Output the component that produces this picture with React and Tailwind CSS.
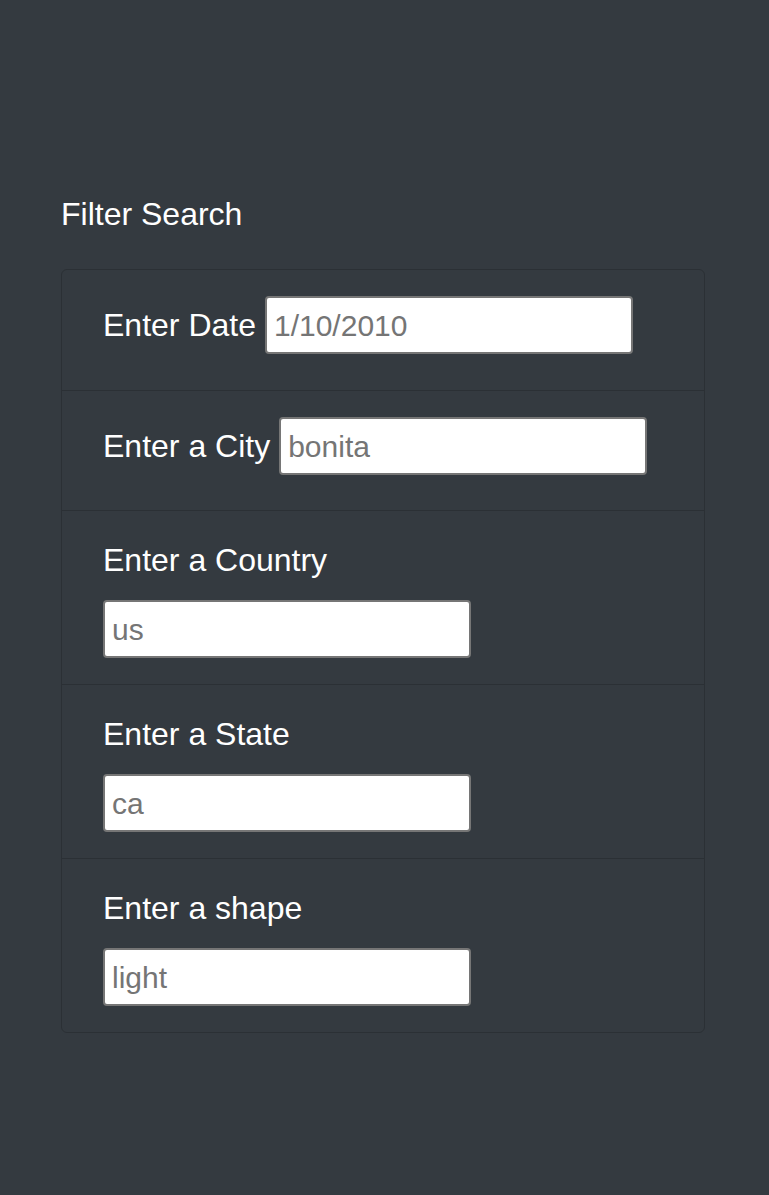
import React from "react";

// Filter Search panel — dark card with list-style rows

const inlineFields = [
  { label: "Enter Date", placeholder: "1/10/2010", pb: "pb-[36px]" },
  { label: "Enter a City", placeholder: "bonita", pb: "pb-[35px]" },
];

const stackedFields = [
  { label: "Enter a Country", placeholder: "us" },
  { label: "Enter a State", placeholder: "ca" },
  { label: "Enter a shape", placeholder: "light" },
];

function Field({ placeholder }) {
  return (
    <input
      type="text"
      placeholder={placeholder}
      className="w-[368px] h-[58px] bg-white border-2 border-[#767676] rounded-[4px] px-[7px] pt-[2px] text-[30px] text-black placeholder:text-[#757575] outline-none"
    />
  );
}

export default function App() {
  return (
    <div
      className="min-h-[1195px] bg-[#343a40] text-white"
      style={{ fontFamily: '"Liberation Sans", Arial, sans-serif' }}
    >
      <main className="pt-[190px] pl-[61px] pr-[64px]">
        {/* ------------ Title ------------ */}
        <h2 className="text-[32px] leading-[48px] font-normal">Filter Search</h2>

        {/* ------------ Filter list ------------ */}
        <ul className="mt-[31px] border border-[#2b3035] rounded-[6px] overflow-hidden">
          {inlineFields.map((f) => (
            <li
              key={f.label}
              className={
                "flex items-center gap-[9px] px-[41px] pt-[26px] border-b border-[#2b3035] " +
                f.pb
              }
            >
              <label className="text-[32px] leading-[48px]">{f.label}</label>
              <Field placeholder={f.placeholder} />
            </li>
          ))}

          {stackedFields.map((f, i) => (
            <li
              key={f.label}
              className={
                "px-[41px] pt-[25px] pb-[26px] " +
                (i < stackedFields.length - 1 ? "border-b border-[#2b3035]" : "")
              }
            >
              <label className="block text-[32px] leading-[48px]">{f.label}</label>
              <div className="mt-[16px]">
                <Field placeholder={f.placeholder} />
              </div>
            </li>
          ))}
        </ul>
      </main>
    </div>
  );
}
